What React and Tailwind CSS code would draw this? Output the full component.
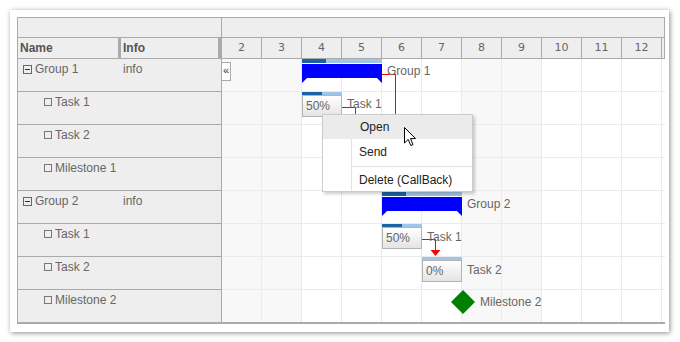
import React from 'react';

const rows = [
  { name: 'Group 1', info: 'info', group: true },
  { name: 'Task 1' },
  { name: 'Task 2' },
  { name: 'Milestone 1' },
  { name: 'Group 2', info: 'info', group: true },
  { name: 'Task 1' },
  { name: 'Task 2' },
  { name: 'Milestone 2' },
];

const days = [2, 3, 4, 5, 6, 7, 8, 9, 10, 11, 12];
const weekend = [2, 3, 8, 9];

function GroupBar({ left, top, done }) {
  return (
    <div className="absolute w-[80px]" style={{ left, top }}>
      <div className="flex h-[4px] bg-[#9fc5e8]">
        <div className="h-full bg-[#1c62a6]" style={{ width: done }} />
      </div>
      <svg width="80" height="20" className="mt-px block">
        <polygon points="0,0 80,0 80,19 75,14 5,14 0,19" fill="#0000ff" />
      </svg>
    </div>
  );
}

function TaskBar({ left, top, done, label }) {
  return (
    <div className="absolute w-[40px]" style={{ left, top }}>
      <div className="flex h-[3px] bg-[#9fc5e8]">
        <div className="h-full bg-[#1c62a6]" style={{ width: done }} />
      </div>
      <div className="h-[22px] border border-[#b4b4b4] bg-gradient-to-b from-white to-[#e4e4e4] pl-[3px] text-[12px] leading-[20px] text-[#666]">
        {label}
      </div>
    </div>
  );
}

function Label({ left, top, children }) {
  return (
    <div className="absolute text-[12px] leading-[14px] text-[#666] whitespace-nowrap" style={{ left, top }}>
      {children}
    </div>
  );
}

export default function App() {
  return (
    <div className="w-[680px] h-[342px] bg-white pl-[10px] pt-[10px] font-['Liberation_Sans',Arial,sans-serif]">
      <div className="w-[659px] h-[322px] bg-white pl-[7px] pt-[7px] shadow-[1px_1px_5px_rgba(0,0,0,0.45)]">
        <div className="w-[648px] flex border-t border-l border-b-2 border-[#aaa]">
          {/* left pane */}
          <div className="w-[204px] border-r border-[#aaa] bg-[#eee] text-[12px] text-[#666]">
            <div className="h-[20px] border-b border-[#aaa]" />
            <div className="h-[21px] flex items-stretch border-b border-[#aaa] font-bold text-[#555]">
              <div className="w-[100px] pl-[2px] flex items-center">Name</div>
              <div className="w-[3px] bg-[#aaa]" />
              <div className="w-[97px] pl-[2px] flex items-center">Info</div>
              <div className="w-[3px] bg-[#aaa]" />
            </div>
            {rows.map((r, i) => (
              <div
                key={i}
                className={`flex pt-[3px] leading-[14px] ${i < rows.length - 1 ? 'h-[33px] border-b border-[#aaa]' : 'h-[32px]'}`}
              >
                <div className={`w-[103px] flex items-center gap-[3px] self-start ${r.group ? 'pl-[5px]' : 'pl-[26px]'}`}>
                  {r.group ? (
                    <span className="w-[9px] h-[9px] border border-[#666] flex items-center justify-center">
                      <span className="w-[5px] h-px bg-[#333]" />
                    </span>
                  ) : (
                    <span className="w-[8px] h-[8px] border border-[#777]" />
                  )}
                  <span>{r.name}</span>
                </div>
                <div className="pl-[2px]">{r.info}</div>
              </div>
            ))}
          </div>

          {/* timeline */}
          <div className="w-[443px] font-['DejaVu_Sans',sans-serif]">
            <div className="h-[20px] border-b border-r border-[#aaa] bg-[#eee]" />
            <div className="h-[21px] flex border-b border-r border-[#aaa] bg-[#eee] text-[11px] text-[#666]">
              {days.map((d) => (
                <div key={d} className="w-[40px] shrink-0 border-r border-[#aaa] flex items-center justify-center">
                  {d}
                </div>
              ))}
            </div>
            <div className="relative">
              {rows.map((r, i) => (
                <div key={i} className={`flex ${i < rows.length - 1 ? 'h-[33px] border-b border-[#ebebeb]' : 'h-[32px]'}`}>
                  {days.map((d) => (
                    <div
                      key={d}
                      className={`w-[40px] shrink-0 border-r border-[#ebebeb] ${weekend.includes(d) ? 'bg-[#f8f8f8]' : 'bg-white'}`}
                    />
                  ))}
                  <div className="flex-1 bg-white" />
                </div>
              ))}

              <div className="absolute left-[-1px] top-[3px] w-[10px] h-[19px] border border-[#aaa] bg-white text-[11px] leading-[15px] text-[#333] text-center font-['Liberation_Sans',sans-serif]">
                «
              </div>

              <svg className="absolute left-0 top-0 pointer-events-none" width="443" height="263">
                <polyline points="159,15.5 173.5,15.5 173.5,70" fill="none" stroke="#ff0000" strokeWidth="1" />
                <polyline points="120,48.5 133.5,48.5 133.5,70" fill="none" stroke="#ff0000" strokeWidth="1" />
                <polyline points="199,180.5 213.5,180.5 213.5,192" fill="none" stroke="#ff0000" strokeWidth="1" />
                <polygon points="208.5,191 218.5,191 213.5,197" fill="#ff0000" />
              </svg>

              <div className="font-['Liberation_Sans',sans-serif]">
                <GroupBar left={80} top={0} done={24} />
                <Label left={165} top={5}>Group 1</Label>
                <TaskBar left={80} top={33} done={20} label="50%" />
                <Label left={125} top={38}>Task 1</Label>

                <GroupBar left={160} top={133} done={24} />
                <Label left={245} top={138}>Group 2</Label>
                <TaskBar left={160} top={165} done={20} label="50%" />
                <Label left={205} top={171}>Task 1</Label>
                <TaskBar left={200} top={198} done={0} label="0%" />
                <Label left={245} top={204}>Task 2</Label>

                <svg className="absolute left-[229px] top-[231px]" width="24" height="24">
                  <polygon points="12,0 24,12 12,24 0,12" fill="#008000" />
                </svg>
                <Label left={258} top={236}>Milestone 2</Label>

                {/* context menu */}
                <div className="absolute left-[100px] top-[55px] w-[151px] h-[78px] bg-white border border-[#ccc] shadow-[2px_2px_3px_rgba(0,0,0,0.2)] text-[12px] text-[#222]">
                  <div className="h-[24px] bg-[#ebebeb] flex items-center pl-[37px]">Open</div>
                  <div className="h-[25px] flex">
                    <div className="w-[29px] border-r border-[#e2e2e2]" />
                    <div className="pl-[7px] flex items-center">Send</div>
                  </div>
                  <div className="h-[4px] flex">
                    <div className="w-[29px] border-r border-[#e2e2e2]" />
                    <div className="flex-1 flex items-center">
                      <div className="w-full h-px bg-[#e2e2e2]" />
                    </div>
                  </div>
                  <div className="h-[23px] flex">
                    <div className="w-[29px] border-r border-[#e2e2e2]" />
                    <div className="pl-[7px] flex items-center">Delete (CallBack)</div>
                  </div>
                </div>

                <svg className="absolute left-[182px] top-[68px]" width="13" height="20">
                  <path d="M0.5 0.5 L0.5 16 L4.2 12.4 L6.8 18.5 L9 17.6 L6.5 11.6 L11.5 11.6 Z" fill="#fff" stroke="#000" strokeWidth="1" strokeLinejoin="round" />
                </svg>
              </div>
            </div>
          </div>
        </div>
      </div>
    </div>
  );
}
